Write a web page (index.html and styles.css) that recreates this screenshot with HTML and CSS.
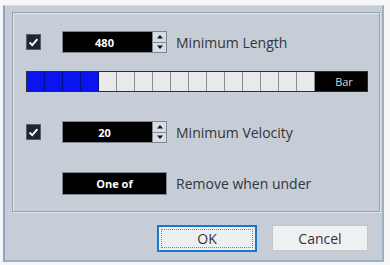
FILE: index.html
```html
<!DOCTYPE html>
<html>
<head>
<meta charset="utf-8">
<link rel="stylesheet" href="styles.css">
</head>
<body>
<div class="dialog">
  <div class="group">
    <div class="row">
      <span class="check"><svg viewBox="0 0 15 15" width="15" height="15"><path d="M3 7.5 L6 10.5 L12 3.5" fill="none" stroke="#fff" stroke-width="2.2"/></svg></span>
      <div class="field"><span class="value">480</span></div>
      <div class="spin"><span class="up"><svg viewBox="0 0 12 9" width="12" height="9"><path d="M3 6.5 L6 3 L9 6.5 Z" fill="#111"/></svg></span><span class="down"><svg viewBox="0 0 12 9" width="12" height="9"><path d="M3 2.5 L6 6 L9 2.5 Z" fill="#111"/></svg></span></div>
      <span class="label">Minimum Length</span>
    </div>
    <div class="bar">
      <span class="cell on"></span><span class="cell on"></span><span class="cell on"></span><span class="cell on"></span>
      <span class="cell"></span><span class="cell"></span><span class="cell"></span><span class="cell"></span>
      <span class="cell"></span><span class="cell"></span><span class="cell"></span><span class="cell"></span>
      <span class="cell"></span><span class="cell"></span><span class="cell"></span><span class="cell"></span>
      <span class="unit">Bar</span>
    </div>
    <div class="row row2">
      <span class="check"><svg viewBox="0 0 15 15" width="15" height="15"><path d="M3 7.5 L6 10.5 L12 3.5" fill="none" stroke="#fff" stroke-width="2.2"/></svg></span>
      <div class="field"><span class="value">20</span></div>
      <div class="spin"><span class="up"><svg viewBox="0 0 12 9" width="12" height="9"><path d="M3 6.5 L6 3 L9 6.5 Z" fill="#111"/></svg></span><span class="down"><svg viewBox="0 0 12 9" width="12" height="9"><path d="M3 2.5 L6 6 L9 2.5 Z" fill="#111"/></svg></span></div>
      <span class="label">Minimum Velocity</span>
    </div>
    <div class="row row3">
      <span class="nocheck"></span>
      <div class="field wide"><span class="value">One of</span></div>
      <span class="label">Remove when under</span>
    </div>
  </div>
  <div class="buttons">
    <button class="btn ok"><span class="focus">OK</span></button>
    <button class="btn cancel">Cancel</button>
  </div>
</div>
</body>
</html>
```
FILE: styles.css
```css
html, body {
  margin: 0;
  padding: 0;
  background: #f4f6f8;
}
body {
  width: 390px;
  height: 265px;
  overflow: hidden;
  font-family: "Open Sans", "Noto Sans", sans-serif;
}
.dialog {
  box-sizing: border-box;
  margin: 5px 0 0 3px;
  width: 381px;
  height: 257px;
  background: #c6cdd6;
  border-left: 2px solid #8fa8c0;
  border-right: 2px solid #9cb0c4;
  border-bottom: 2px solid #9cb0c4;
  border-top: 1px solid #d8dde3;
  padding: 6px 0 0 7px;
  display: flex;
  flex-direction: column;
}
.group {
  box-sizing: border-box;
  width: 368px;
  height: 200px;
  border: 1px solid #97a1ac;
  box-shadow: inset 1px 1px 0 #e2e6ea, 1px 1px 0 #e2e6ea;
  padding: 18px 0 0 13px;
  display: flex;
  flex-direction: column;
}
.row {
  display: flex;
  align-items: center;
  height: 22px;
}
.row2 { margin-top: 29px; }
.row3 { margin-top: 29px; height: 23px; }
.check {
  box-sizing: border-box;
  width: 15px;
  height: 16px;
  background: #1d2733;
  border: 1px solid #55606b;
  display: flex;
  align-items: center;
  justify-content: center;
  margin-right: 21px;
}
.check svg { display: block; }
.nocheck {
  width: 15px;
  margin-right: 21px;
}
.field {
  box-sizing: border-box;
  width: 91px;
  height: 22px;
  background: #000;
  border: 1px solid #7c8793;
  display: flex;
  align-items: center;
  justify-content: center;
  color: #fff;
  font-weight: bold;
  font-size: 11px;
  padding-right: 6px;
}
.field.wide {
  width: 105px;
  height: 23px;
  padding-right: 0;
  margin-right: 9px;
}
.spin {
  box-sizing: border-box;
  width: 14px;
  height: 22px;
  display: flex;
  flex-direction: column;
  border: 1px solid #7c8793;
  border-left: none;
  margin-right: 9px;
}
.spin span {
  flex: 1;
  background: #d9dde2;
  display: flex;
  align-items: center;
  justify-content: center;
}
.spin .up { border-bottom: 1px solid #7c8793; }
.spin svg { display: block; }
.label {
  font-size: 14px;
  color: #30363d;
}
.bar {
  margin-top: 18px;
  box-sizing: border-box;
  width: 342px;
  height: 21px;
  display: flex;
  border: 1px solid #2a2f36;
  background: #2a2f36;
}
.cell {
  box-sizing: border-box;
  width: 18px;
  height: 100%;
  background: #e9eaec;
  border-right: 1px solid #8a8f95;
}
.cell.on {
  background: #0a14f0;
  border-right: 1px solid #001080;
}
.unit {
  flex: 1;
  background: #000;
  color: #d8d8d8;
  font-size: 11px;
  display: flex;
  align-items: center;
  justify-content: center;
  padding-left: 6px;
}
.buttons {
  display: flex;
  margin-top: 13px;
  padding-left: 145px;
  gap: 15px;
  align-items: flex-start;
}
.btn {
  box-sizing: border-box;
  height: 27px;
  font-family: "Open Sans", "Noto Sans", sans-serif;
  font-size: 14px;
  color: #30363d;
  background: #eeeff1;
  padding: 0;
  margin: 0;
}
.ok {
  width: 100px;
  border: 2px solid #1976c8;
  display: flex;
  align-items: center;
  justify-content: center;
}
.ok .focus {
  box-sizing: border-box;
  width: 92px;
  height: 19px;
  border: 1px dotted #7a828a;
  display: flex;
  align-items: center;
  justify-content: center;
}
.cancel {
  width: 96px;
  height: 26px;
  border: 1px solid #c2c7cd;
  background: #eff0f2;
}
```
